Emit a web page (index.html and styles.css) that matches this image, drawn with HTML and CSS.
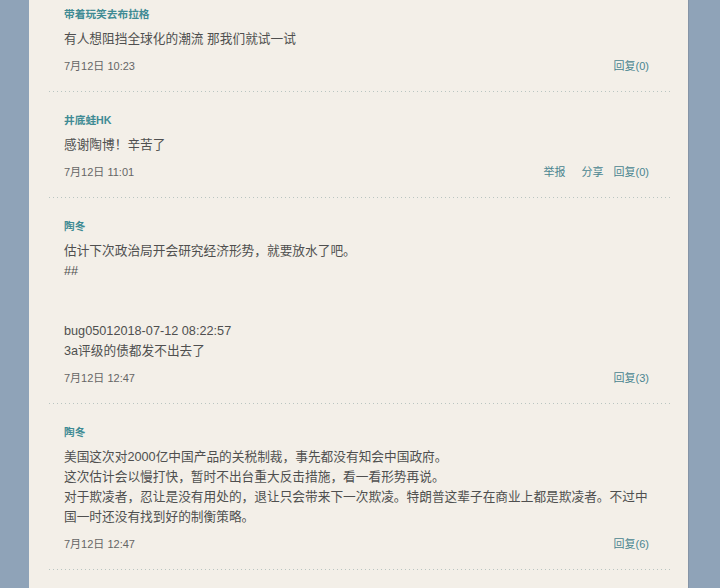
FILE: index.html
```html
<!DOCTYPE html>
<html lang="zh-CN">
<head>
  <meta charset="UTF-8">
  <meta name="viewport" content="width=device-width, initial-scale=1.0">
  <title>评论</title>
  <link rel="stylesheet" href="styles.css">
</head>
<body>

<div class="pagina">
  <ul class="comentarios">
    <li class="comentario">
      <div class="autor">带着玩笑去布拉格</div>
      <div class="texto">有人想阻挡全球化的潮流 那我们就试一试</div>
      <div class="rodape">
        <span class="data">7月12日 10:23</span>
        <span class="acoes"><a>回复(0)</a></span>
      </div>
    </li>
    <li class="comentario">
      <div class="autor">井底蛙HK</div>
      <div class="texto">感谢陶博！辛苦了</div>
      <div class="rodape">
        <span class="data">7月12日 11:01</span>
        <span class="acoes"><a class="largo">举报</a><a>分享</a><a>回复(0)</a></span>
      </div>
    </li>
    <li class="comentario">
      <div class="autor">陶冬</div>
      <div class="texto">估计下次政治局开会研究经济形势，就要放水了吧。<br>##<br><br><br>bug05012018-07-12 08:22:57<br>3a评级的债都发不出去了</div>
      <div class="rodape">
        <span class="data">7月12日 12:47</span>
        <span class="acoes"><a>回复(3)</a></span>
      </div>
    </li>
    <li class="comentario">
      <div class="autor">陶冬</div>
      <div class="texto">美国这次对2000亿中国产品的关税制裁，事先都没有知会中国政府。<br>这次估计会以慢打快，暂时不出台重大反击措施，看一看形势再说。<br>对于欺凌者，忍让是没有用处的，退让只会带来下一次欺凌。特朗普这辈子在商业上都是欺凌者。不过中国一时还没有找到好的制衡策略。</div>
      <div class="rodape">
        <span class="data">7月12日 12:47</span>
        <span class="acoes"><a>回复(6)</a></span>
      </div>
    </li>
  </ul>
</div>

</body>
</html>
```

FILE: styles.css
```css
body {
    margin: 0;
    background-color: #8fa3b8;
    font-family: "Liberation Sans", Arial, "Noto Sans CJK SC", sans-serif;
    overflow: hidden;
}

.pagina {
    display: flow-root;
    width: 660px;
    margin-left: 29px;
    min-height: 588px;
    background-color: #f3efe8;
    border-right: 1px solid #8594a6;
    padding: 0 18px 0 20px;
    box-sizing: border-box;
}

.comentarios {
    list-style: none;
    margin: -13px 0 0 0;
    padding: 0;
}

.comentario {
    padding: 17px 21px 16px 15px;
    border-bottom: 1px solid transparent;
    background-image: linear-gradient(to right, #b9c5c1 1px, transparent 1px);
    background-size: 4px 1px;
    background-repeat: repeat-x;
    background-position: left bottom;
}

.autor {
    font-size: 10.7px;
    line-height: 20px;
    font-weight: bold;
    color: #3f8b94;
}

.texto {
    margin-top: 5px;
    font-size: 12.7px;
    line-height: 20px;
    color: #4f4f4f;
}

.rodape {
    display: flex;
    justify-content: space-between;
    margin-top: 7px;
    font-size: 11px;
    line-height: 20px;
}

.data {
    color: #666;
}

.acoes {
    display: flex;
    gap: 10px;
}

.acoes a {
    color: #4a8590;
    cursor: pointer;
}

.acoes a.largo {
    margin-right: 6px;
}
```
